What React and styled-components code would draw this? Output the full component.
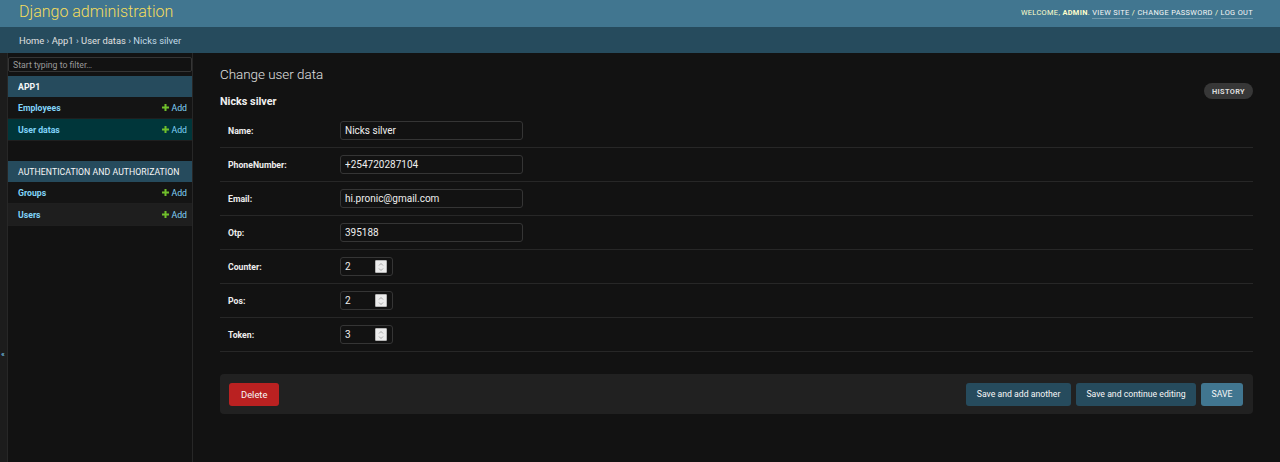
import React from 'react';
import styled, { createGlobalStyle, css } from 'styled-components';

const GlobalStyle = createGlobalStyle`
  html, body {
    margin: 0;
    padding: 0;
    background: #121212;
    color: #eeeeee;
    font-family: Roboto, 'Liberation Sans', Arial, sans-serif;
  }
  * {
    box-sizing: border-box;
  }
`;

const Page = styled.div`
  min-height: 100vh;
  display: flex;
  flex-direction: column;
`;

/* top header */
const Header = styled.header`
  height: 27px;
  background: #417690;
  display: flex;
  align-items: center;
  justify-content: space-between;
  padding: 0 27px 4px 19px;
`;

const Branding = styled.div`
  color: #f5dd5d;
  font-size: 16px;
  font-weight: 300;
  line-height: 1;
`;

const UserTools = styled.div`
  color: #ffffcc;
  font-size: 7.4px;
  letter-spacing: 0.35px;
  text-transform: uppercase;
  line-height: 1;
  padding-top: 2px;

  strong {
    font-weight: 700;
  }
`;

const ToolLink = styled.a`
  color: #f7f7f7;
  text-decoration: none;
  border-bottom: 1px solid rgba(255, 255, 255, 0.25);
  padding-bottom: 1px;
`;

const Breadcrumbs = styled.nav`
  height: 26px;
  background: #264b5d;
  color: #c4dce8;
  font-size: 9.4px;
  display: flex;
  align-items: center;
  padding: 0 19px;

  a {
    color: #e0e0e0;
    text-decoration: none;
  }
`;

const Main = styled.div`
  flex: 1;
  display: flex;
`;

/* sidebar */
const ToggleColumn = styled.div`
  width: 8px;
  flex-shrink: 0;
  background: #1c1c1c;
  border-right: 1px solid #272727;
  overflow: hidden;
  padding-top: 297px;
`;

const ToggleGlyph = styled.span`
  display: block;
  color: #81d4fa;
  font-size: 8px;
  line-height: 9px;
  padding-left: 1px;
`;

const Sidebar = styled.nav`
  width: 185px;
  flex-shrink: 0;
  border-right: 1px solid #272727;
  padding-top: 4px;
`;

const FilterInput = styled.input`
  display: block;
  width: 100%;
  height: 15px;
  margin: 0 0 4px;
  padding: 0 4px;
  background: #121212;
  border: 1px solid #353535;
  border-radius: 2px;
  color: #eee;
  font-family: inherit;
  font-size: 8.7px;
  outline: none;

  &::placeholder {
    color: #9a9a9a;
  }
`;

const Module = styled.div`
  margin-bottom: 20px;
`;

const Caption = styled.div`
  height: 21px;
  background: #264b5d;
  color: #f7f7f7;
  display: flex;
  align-items: center;
  padding: 0 6px 0 10px;
  font-size: 8.7px;
  letter-spacing: 0.05px;
  white-space: nowrap;
  overflow: hidden;
  text-transform: uppercase;
  font-weight: ${({ $current }) => ($current ? 700 : 400)};
`;

const NavRow = styled.div`
  height: 22px;
  display: flex;
  align-items: center;
  justify-content: space-between;
  padding: 0 5px 0 10px;
  border-bottom: 1px solid #1f1f1f;
  background: #141414;

  ${({ $alt }) =>
    $alt &&
    css`
      background: #1e1e1e;
    `}

  ${({ $selected }) =>
    $selected &&
    css`
      background: #00363a;
    `}
`;

const NavLink = styled.a`
  color: #81d4fa;
  font-size: 8.7px;
  font-weight: 700;
  text-decoration: none;
`;

const AddLink = styled.a`
  color: #81d4fa;
  font-size: 8.7px;
  text-decoration: none;
  display: flex;
  align-items: center;
  gap: 3px;
`;

const PlusIcon = () => (
  <svg width="7" height="7" viewBox="0 0 14 14">
    <path d="M5 0h4v5h5v4H9v5H5V9H0V5h5z" fill="#70bf2b" />
  </svg>
);

/* content */
const Content = styled.main`
  flex: 1;
  padding: 13px 27px 20px 27px;
`;

const TitleBar = styled.div`
  display: flex;
  justify-content: space-between;
  align-items: flex-start;
`;

const Titles = styled.div``;

const PageTitle = styled.h1`
  margin: 0;
  font-size: 13.4px;
  line-height: 18px;
  font-weight: 300;
  color: #e0e0e0;
`;

const SubTitle = styled.h2`
  margin: 11px 0 0;
  font-size: 10.8px;
  line-height: 14px;
  font-weight: 700;
  color: #f0f0f0;
`;

const HistoryButton = styled.a`
  margin-top: 17px;
  height: 16px;
  padding: 0 8px;
  border-radius: 10px;
  background: #373737;
  color: #dcdcdc;
  font-size: 7.4px;
  font-weight: 700;
  letter-spacing: 0.35px;
  text-transform: uppercase;
  display: flex;
  align-items: center;
  text-decoration: none;
`;

const Fieldset = styled.div`
  margin-top: 5px;
`;

const FormRow = styled.div`
  height: 34px;
  display: flex;
  align-items: center;
  padding: 0 8px;
  border-bottom: 1px solid #272727;
`;

const Label = styled.label`
  width: 112px;
  flex-shrink: 0;
  font-size: 8.7px;
  font-weight: 700;
  color: #eeeeee;
`;

const TextInput = styled.input`
  width: 183px;
  height: 19px;
  padding: 0 4px;
  background: #121212;
  border: 1px solid #353535;
  border-radius: 3px;
  color: #eeeeee;
  font-family: inherit;
  font-size: 10px;
  outline: none;
`;

const NumberBox = styled.div`
  width: 53px;
  height: 19px;
  padding: 0 5px 0 4px;
  background: #121212;
  border: 1px solid #353535;
  border-radius: 3px;
  display: flex;
  align-items: center;
  justify-content: space-between;
  color: #eeeeee;
  font-size: 10px;
`;

const Spinner = styled.span`
  width: 12px;
  height: 13px;
  background: #ececec;
  border: 1px solid #b5b5b5;
  border-radius: 1px;
  display: flex;
  flex-direction: column;
  align-items: center;
  justify-content: center;
  gap: 2px;
`;

const SpinnerArrows = () => (
  <>
    <svg width="6" height="3" viewBox="0 0 10 6">
      <path d="M1 5l4-4 4 4" stroke="#8a8a8a" strokeWidth="1.4" fill="none" />
    </svg>
    <svg width="6" height="3" viewBox="0 0 10 6">
      <path d="M1 1l4 4 4-4" stroke="#8a8a8a" strokeWidth="1.4" fill="none" />
    </svg>
  </>
);

const SubmitRow = styled.div`
  margin-top: 22px;
  height: 40px;
  padding: 0 10px 0 9px;
  background: #212121;
  border-radius: 4px;
  display: flex;
  align-items: center;
  gap: 5px;
`;

const Button = styled.button`
  height: 23px;
  padding: 0 10.5px;
  border: none;
  border-radius: 3px;
  background: ${({ $variant }) =>
    $variant === 'delete' ? '#ba2121' : $variant === 'default' ? '#417690' : '#264b5d'};
  color: #f7f7f7;
  font-family: inherit;
  font-size: 8.7px;
  cursor: pointer;
  ${({ $variant }) =>
    $variant === 'delete' &&
    css`
      margin-right: auto;
      padding: 0 12px;
      font-size: 9.4px;
    `}
  ${({ $variant }) =>
    $variant === 'default' &&
    css`
      text-transform: uppercase;
    `}
`;

const apps = [
  {
    name: 'App1',
    current: true,
    models: [
      { name: 'Employees' },
      { name: 'User datas', selected: true },
    ],
  },
  {
    name: 'Authentication and Authorization',
    models: [{ name: 'Groups' }, { name: 'Users' }],
  },
];

const textFields = [
  { label: 'Name:', value: 'Nicks silver' },
  { label: 'PhoneNumber:', value: '+254720287104' },
  { label: 'Email:', value: 'hi.pronic@gmail.com' },
  { label: 'Otp:', value: '395188' },
];

const numberFields = [
  { label: 'Counter:', value: 2 },
  { label: 'Pos:', value: 2 },
  { label: 'Token:', value: 3 },
];

const App = () => {
  return (
    <>
      <GlobalStyle />
      <Page>
        <Header>
          <Branding>Django administration</Branding>
          <UserTools>
            Welcome, <strong>admin</strong>. <ToolLink href="#">View site</ToolLink> /{' '}
            <ToolLink href="#">Change password</ToolLink> / <ToolLink href="#">Log out</ToolLink>
          </UserTools>
        </Header>
        <Breadcrumbs>
          <a href="#">Home</a>&nbsp;›&nbsp;<a href="#">App1</a>&nbsp;›&nbsp;
          <a href="#">User datas</a>&nbsp;›&nbsp;Nicks silver
        </Breadcrumbs>
        <Main>
          <ToggleColumn>
            <ToggleGlyph>«</ToggleGlyph>
          </ToggleColumn>
          <Sidebar>
            <FilterInput placeholder="Start typing to filter…" />
            {apps.map((app) => (
              <Module key={app.name}>
                <Caption $current={app.current}>{app.name}</Caption>
                {app.models.map((model, i) => (
                  <NavRow key={model.name} $alt={i % 2 === 1} $selected={model.selected}>
                    <NavLink href="#">{model.name}</NavLink>
                    <AddLink href="#">
                      <PlusIcon />
                      Add
                    </AddLink>
                  </NavRow>
                ))}
              </Module>
            ))}
          </Sidebar>
          <Content>
            <TitleBar>
              <Titles>
                <PageTitle>Change user data</PageTitle>
                <SubTitle>Nicks silver</SubTitle>
              </Titles>
              <HistoryButton href="#">History</HistoryButton>
            </TitleBar>
            <Fieldset>
              {textFields.map((field) => (
                <FormRow key={field.label}>
                  <Label>{field.label}</Label>
                  <TextInput defaultValue={field.value} />
                </FormRow>
              ))}
              {numberFields.map((field) => (
                <FormRow key={field.label}>
                  <Label>{field.label}</Label>
                  <NumberBox>
                    {field.value}
                    <Spinner>
                      <SpinnerArrows />
                    </Spinner>
                  </NumberBox>
                </FormRow>
              ))}
            </Fieldset>
            <SubmitRow>
              <Button $variant="delete">Delete</Button>
              <Button>Save and add another</Button>
              <Button>Save and continue editing</Button>
              <Button $variant="default">Save</Button>
            </SubmitRow>
          </Content>
        </Main>
      </Page>
    </>
  );
};

export default App;
